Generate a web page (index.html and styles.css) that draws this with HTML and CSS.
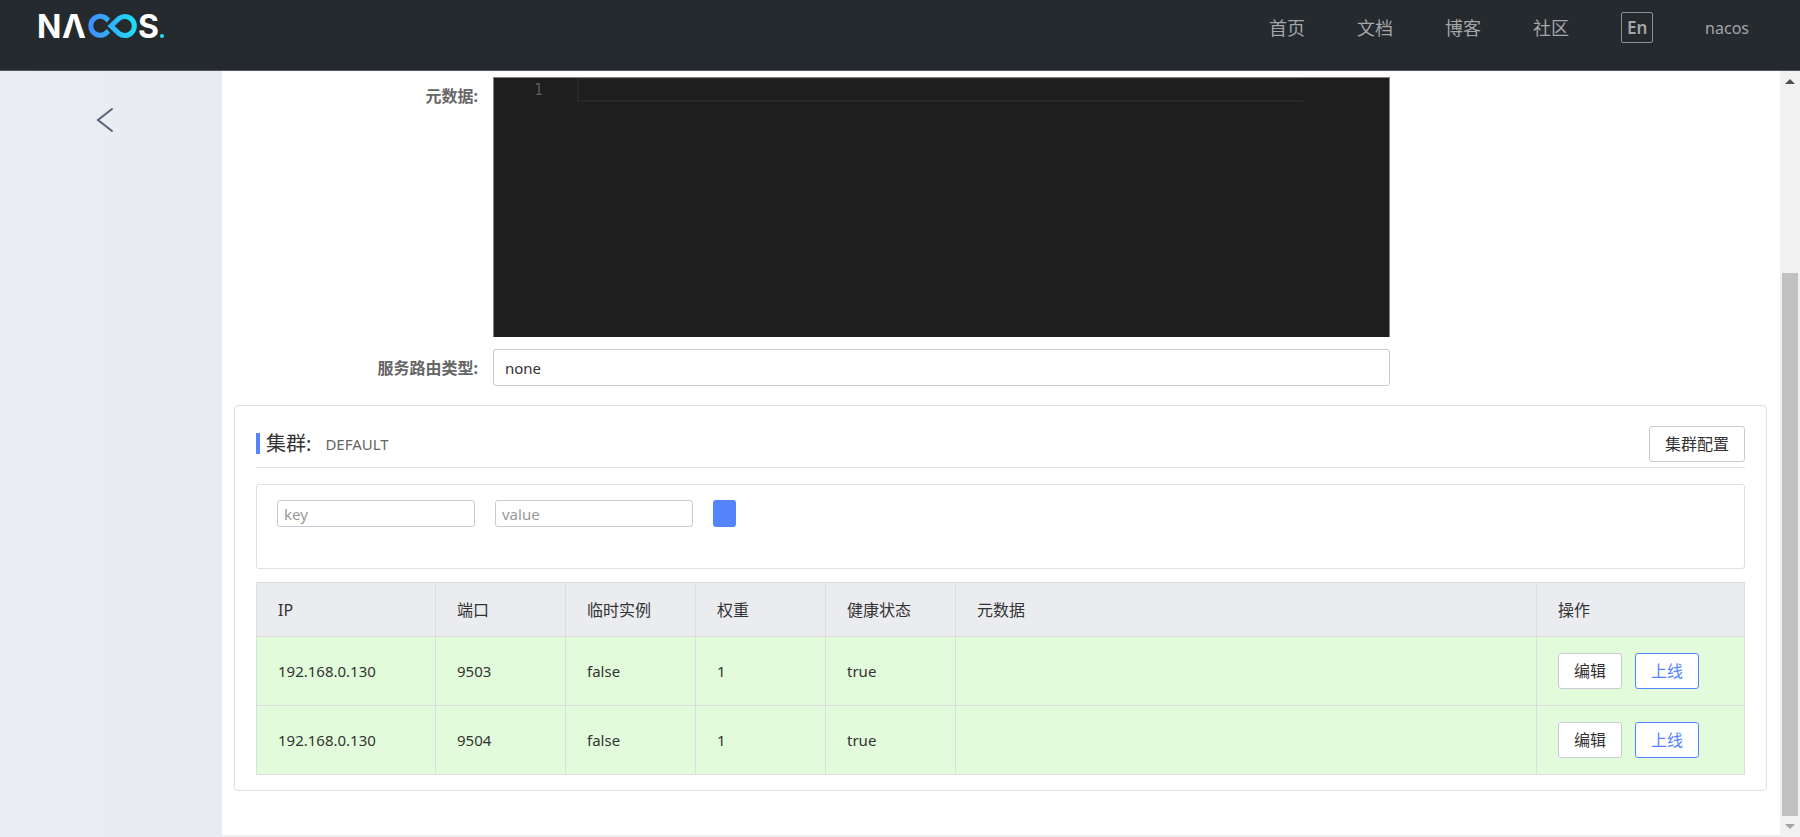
FILE: index.html
```html
<!DOCTYPE html>
<html lang="zh-CN">
<head>
    <meta charset="UTF-8">
    <meta name="viewport" content="width=device-width, initial-scale=1.0">
    <title>Nacos</title>
    <link rel="stylesheet" href="styles.css">
</head>
<body>
    <header class="header">
        <a href="#" class="logo" aria-label="Nacos">
            <svg width="134" height="50" viewBox="-4 -10 134 50">
                <defs>
                    <linearGradient id="loop" gradientUnits="userSpaceOnUse" x1="47" y1="0" x2="99" y2="0">
                        <stop offset="0" stop-color="#4386ff"/>
                        <stop offset="0.5" stop-color="#2fb4fa"/>
                        <stop offset="1" stop-color="#1ce3f3"/>
                    </linearGradient>
                </defs>
                <text class="logo-text" x="-2" y="26">N</text>
                <text class="logo-text" x="23" y="26">Λ</text>
                <g fill="none" stroke="url(#loop)" stroke-width="5">
                    <path d="M69.500 8.500 L66 5.500 A9.500 9.500 0 1 0 66 22 L69.500 19"/>
                    <path d="M72 14 L80 6.500 A9.500 9.500 0 1 1 80 21.500 Z"/>
                </g>
                <text class="logo-text" x="99" y="26">S</text>
                <circle cx="123" cy="24" r="2" fill="#1ce3f3"/>
            </svg>
        </a>
        <nav class="nav">
            <a href="#">首页</a>
            <a href="#">文档</a>
            <a href="#">博客</a>
            <a href="#">社区</a>
            <button type="button" class="lang-btn">En</button>
            <a href="#" class="user">nacos</a>
        </nav>
    </header>

    <div class="page">
        <aside class="sidebar">
            <button type="button" class="back-btn" aria-label="返回">
                <svg width="18" height="26" viewBox="0 0 18 26"><path d="M16 2 L2 13 L16 24" fill="none" stroke="#546478" stroke-width="2" stroke-linecap="round"/></svg>
            </button>
        </aside>

        <main class="main">
            <form class="service-form">
                <label for="metadata">元数据:</label>
                <div class="editor">
                    <span class="line-number">1</span>
                    <textarea id="metadata" rows="1"></textarea>
                </div>
                <label for="selector">服务路由类型:</label>
                <input type="text" id="selector" value="none">
            </form>

            <section class="card">
                <div class="card-head">
                    <h2>集群:</h2>
                    <span class="cluster-name">DEFAULT</span>
                    <button type="button" class="btn">集群配置</button>
                </div>

                <form class="filter">
                    <input type="text" placeholder="key" aria-label="key">
                    <input type="text" placeholder="value" aria-label="value">
                    <button type="button" class="add-btn" aria-label="添加"></button>
                </form>

                <table class="instances">
                    <colgroup>
                        <col class="col-ip">
                        <col class="col-small">
                        <col class="col-small">
                        <col class="col-small">
                        <col class="col-small">
                        <col>
                        <col class="col-action">
                    </colgroup>
                    <thead>
                        <tr>
                            <th>IP</th>
                            <th>端口</th>
                            <th>临时实例</th>
                            <th>权重</th>
                            <th>健康状态</th>
                            <th>元数据</th>
                            <th>操作</th>
                        </tr>
                    </thead>
                    <tbody>
                        <tr>
                            <td>192.168.0.130</td>
                            <td>9503</td>
                            <td>false</td>
                            <td>1</td>
                            <td>true</td>
                            <td></td>
                            <td>
                                <div class="actions">
                                    <button type="button" class="btn">编辑</button>
                                    <button type="button" class="btn btn-primary">上线</button>
                                </div>
                            </td>
                        </tr>
                        <tr>
                            <td>192.168.0.130</td>
                            <td>9504</td>
                            <td>false</td>
                            <td>1</td>
                            <td>true</td>
                            <td></td>
                            <td>
                                <div class="actions">
                                    <button type="button" class="btn">编辑</button>
                                    <button type="button" class="btn btn-primary">上线</button>
                                </div>
                            </td>
                        </tr>
                    </tbody>
                </table>
            </section>
        </main>

        <div class="scrollbar" aria-hidden="true">
            <span class="arrow-up"></span>
            <span class="track"><span class="thumb"></span></span>
            <span class="arrow-down"></span>
        </div>
    </div>
</body>
</html>
```
FILE: styles.css
```css
* {
    box-sizing: border-box;
}
body {
    margin: 0;
    height: 100vh;
    display: flex;
    flex-direction: column;
    overflow: hidden;
    background: #fff;
    color: #333;
    font-family: "Noto Sans", "Noto Sans CJK SC", sans-serif;
    font-size: 15px;
    line-height: 20px;
}
button, input, textarea {
    font: inherit;
    color: inherit;
}
button {
    cursor: pointer;
}

/* header */
.header {
    flex: none;
    height: 71px;
    display: flex;
    justify-content: space-between;
    align-items: flex-start;
    padding: 2px 51px 0 35px;
    background: #252a2f;
    border-bottom: 1px solid #55565b;
}
.logo svg {
    display: block;
    overflow: visible;
}
.logo-text {
    font-family: Inter, sans-serif;
    font-size: 32px;
    font-weight: 700;
    fill: #fff;
}
.nav {
    display: flex;
    align-items: center;
    gap: 52px;
    height: 31px;
    margin-top: 10px;
}
.nav a {
    color: #a4a6a8;
    font-size: 18px;
    text-decoration: none;
}
.nav .user {
    font-size: 16px;
}
.lang-btn {
    width: 32px;
    height: 31px;
    padding: 0;
    background: none;
    border: 1px solid #8e9193;
    border-radius: 2px;
    color: #a4a6a8;
    font-size: 17px;
    font-weight: 600;
}

/* page */
.page {
    flex: 1;
    min-height: 0;
    display: flex;
}
.sidebar {
    flex: none;
    width: 222px;
    padding: 36px 0 0 96px;
    background: linear-gradient(90deg, #eaedf1, #e8ebf0);
}
.back-btn {
    padding: 0;
    border: none;
    background: none;
}
.back-btn svg {
    display: block;
}
.main {
    flex: 1;
    min-width: 0;
    padding: 6px 13px 0 12px;
    border-bottom: 2px solid #eee;
}

/* service form */
.service-form {
    display: grid;
    grid-template-columns: 259px 19fr 8fr;
    row-gap: 12px;
}
.service-form label {
    grid-column: 1;
    padding: 9px 15px 0 0;
    color: #666;
    font-weight: 700;
    font-size: 16px;
    text-align: right;
}
.service-form input {
    grid-column: 2;
    height: 37px;
    padding: 0 11px;
    border: 1px solid #c9cad4;
    border-radius: 3px;
}
.editor {
    grid-column: 2;
    height: 260px;
    display: grid;
    grid-template-columns: 83px 1fr 86px;
    align-items: start;
    border: 1px solid #808080;
    border-width: 1px 1px 0;
    background: #1e1e1e;
}
.line-number {
    padding: 2px 34px 0 0;
    color: #5a5a5a;
    font-family: "DejaVu Sans Mono", monospace;
    text-align: right;
}
.editor textarea {
    height: 24px;
    padding: 0;
    border: 2px solid #282828;
    border-top-width: 1px;
    border-right: none;
    background: none;
    color: #d4d4d4;
    resize: none;
    overflow: hidden;
}

/* cluster card */
.card {
    margin-top: 19px;
    padding: 20px 21px 15px;
    border: 1px solid #dedfe4;
    border-radius: 4px;
}
.card-head {
    display: flex;
    align-items: center;
    height: 42px;
    border-bottom: 1px solid #e2e3e8;
    padding-bottom: 6px;
}
.card-head h2 {
    margin: 0;
    padding-left: 6px;
    border-left: 4px solid #5584ff;
    font-size: 20px;
    font-weight: 400;
    line-height: 21px;
}
.cluster-name {
    margin-left: 14px;
    color: #666;
}
.card-head .btn {
    margin-left: auto;
}
.btn {
    height: 36px;
    padding: 0 15px;
    border: 1px solid #c9cad4;
    border-radius: 3px;
    background: #fff;
    font-size: 16px;
}
.btn-primary {
    border-color: #5584ff;
    color: #5584ff;
}

.filter {
    display: flex;
    align-items: flex-start;
    gap: 20px;
    height: 85px;
    margin-top: 16px;
    padding: 15px 20px;
    border: 1px solid #dedfe4;
    border-radius: 3px;
}
.filter input {
    width: 198px;
    height: 27px;
    padding: 0 6px;
    border: 1px solid #c9cad4;
    border-radius: 3px;
}
.filter input::placeholder {
    color: #999;
}
.add-btn {
    width: 23px;
    height: 27px;
    padding: 0;
    border: none;
    border-radius: 3px;
    background: #5584ff;
}

/* instance table */
.instances {
    width: 100%;
    margin-top: 13px;
    border-collapse: collapse;
    table-layout: fixed;
}
.col-ip {
    width: 179px;
}
.col-small {
    width: 130px;
}
.col-action {
    width: 208px;
}
.instances th, .instances td {
    padding: 16px 21px;
    border: 1px solid #dcdde3;
    text-align: left;
    font-weight: 400;
}
.instances th {
    height: 54px;
    background: #ebecf0;
    font-size: 16px;
}
.instances td {
    background: #e2fcdb;
}
.actions {
    display: flex;
    gap: 13px;
}

/* scrollbar */
.scrollbar {
    flex: none;
    width: 20px;
    display: flex;
    flex-direction: column;
    align-items: center;
    padding: 8px 0;
    background: #f1f1f1;
}
.arrow-up, .arrow-down {
    border: 5px solid transparent;
}
.arrow-up {
    border-top: none;
    border-bottom-color: #505050;
}
.arrow-down {
    border-bottom: none;
    border-top-color: #a3a3a3;
}
.track {
    flex: 1;
    display: flex;
    flex-direction: column;
    justify-content: flex-end;
    padding: 8px 0;
}
.thumb {
    width: 16px;
    height: 75%;
    background: #c1c1c1;
}
```
